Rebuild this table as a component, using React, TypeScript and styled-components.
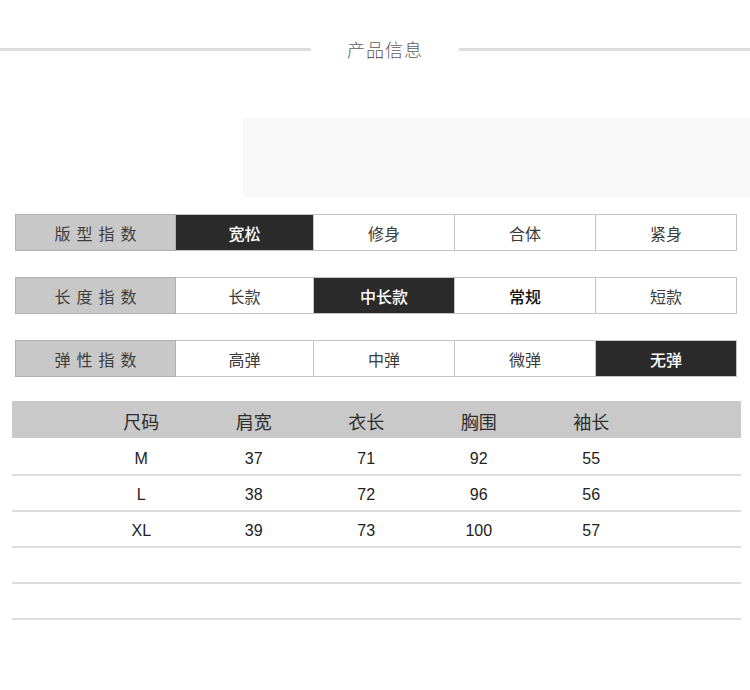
import React from 'react';
import styled, { createGlobalStyle } from 'styled-components';

const GlobalStyle = createGlobalStyle`
  html, body {
    margin: 0;
    padding: 0;
    background: #ffffff;
  }
  body {
    font-family: "Noto Sans CJK SC", "Noto Sans", sans-serif;
  }
`;

const Page = styled.div`
  width: 750px;
  height: 690px;
  background: #ffffff;
  overflow: hidden;
`;

const TitleBar = styled.div`
  display: flex;
  align-items: center;
  height: 28px;
  padding-top: 35px;
`;

const TitleLine = styled.div<{ $w: number }>`
  width: ${p => p.$w}px;
  height: 3px;
  background: #dcdcdc;
  flex-shrink: 0;
`;

const Title = styled.div`
  width: 148px;
  text-align: center;
  font-size: 18px;
  font-weight: 300;
  color: #5c5c5c;
  letter-spacing: 1px;
  line-height: 28px;
`;

const Banner = styled.div`
  margin: 55px 0 0 243px;
  height: 79px;
  background: #f8f8f8;
`;

const IndexList = styled.div`
  display: flex;
  flex-direction: column;
  gap: 26px;
  margin: 17px 0 0 15px;
`;

const IndexRow = styled.div`
  display: grid;
  grid-template-columns: 161px 138px 141px 141px 141px;
  height: 37px;
`;

const IndexLabel = styled.div`
  display: flex;
  align-items: center;
  justify-content: center;
  background: #c8c8c8;
  border: 1px solid #b0b0b0;
  font-size: 16px;
  color: #3d3d3d;
  letter-spacing: 6px;
  padding-left: 6px;
`;

const IndexCell = styled.div<{ $active?: boolean; $bold?: boolean }>`
  display: flex;
  align-items: center;
  justify-content: center;
  border: 1px solid #c4c4c4;
  border-left: none;
  background: ${p => (p.$active ? '#2b2b2b' : '#ffffff')};
  color: ${p => (p.$active ? '#ffffff' : p.$bold ? '#111111' : '#3a3a3a')};
  font-weight: ${p => (p.$active || p.$bold ? 500 : 400)};
  font-size: 16px;
`;

const SizeTable = styled.div`
  margin: 24px 0 0 12px;
  width: 729px;
`;

const SizeBody = styled.div`
  padding-top: 2px;
`;

const SizeRow = styled.div<{ $head?: boolean }>`
  display: grid;
  grid-template-columns: repeat(5, 112.5px);
  padding-left: 73px;
  height: ${p => (p.$head ? '37px' : '34px')};
  background: ${p => (p.$head ? '#c9c9c9' : 'transparent')};
  border-bottom: ${p => (p.$head ? 'none' : '2px solid #dddddd')};
  align-items: center;
`;

const HeadCell = styled.div`
  text-align: center;
  font-size: 18px;
  color: #2e2e2e;
  padding-top: 2px;
`;

const BodyCell = styled.div`
  text-align: center;
  font-family: "Liberation Sans", Arial, sans-serif;
  font-size: 16px;
  color: #222222;
  padding-top: 4px;
`;

const indices = [
  { label: '版型指数', items: ['宽松', '修身', '合体', '紧身'], active: 0, bold: -1 },
  { label: '长度指数', items: ['长款', '中长款', '常规', '短款'], active: 1, bold: 2 },
  { label: '弹性指数', items: ['高弹', '中弹', '微弹', '无弹'], active: 3, bold: -1 },
];

const heads = ['尺码', '肩宽', '衣长', '胸围', '袖长'];
const rows = [
  ['M', '37', '71', '92', '55'],
  ['L', '38', '72', '96', '56'],
  ['XL', '39', '73', '100', '57'],
  ['', '', '', '', ''],
  ['', '', '', '', ''],
];

export default function App() {
  return (
    <Page>
      <GlobalStyle />
      <TitleBar>
        <TitleLine $w={311} />
        <Title>产品信息</Title>
        <TitleLine $w={291} />
      </TitleBar>

      <Banner />

      <IndexList>
        {indices.map(row => (
          <IndexRow key={row.label}>
            <IndexLabel>{row.label}</IndexLabel>
            {row.items.map((item, i) => (
              <IndexCell key={item} $active={i === row.active} $bold={i === row.bold}>
                {item}
              </IndexCell>
            ))}
          </IndexRow>
        ))}
      </IndexList>

      <SizeTable>
        <SizeRow $head>
          {heads.map(h => (
            <HeadCell key={h}>{h}</HeadCell>
          ))}
        </SizeRow>
        <SizeBody>
          {rows.map((r, idx) => (
            <SizeRow key={idx}>
              {r.map((c, j) => (
                <BodyCell key={j}>{c}</BodyCell>
              ))}
            </SizeRow>
          ))}
        </SizeBody>
      </SizeTable>
    </Page>
  );
}
